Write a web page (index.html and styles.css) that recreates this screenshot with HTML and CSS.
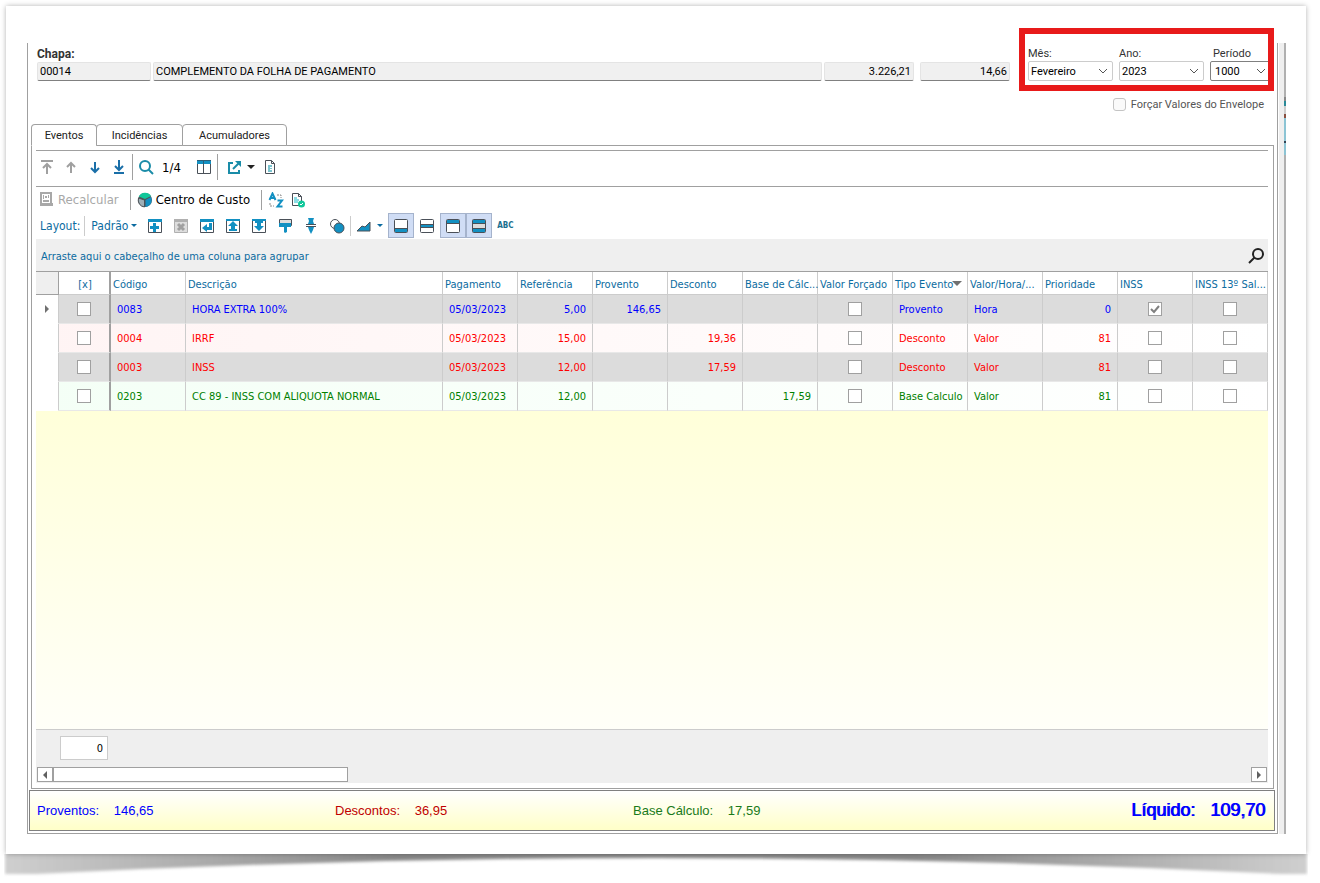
FILE: index.html
```html
<!DOCTYPE html>
<html lang="pt-BR">
<head>
  <meta charset="UTF-8" />
  <meta name="viewport" content="width=device-width, initial-scale=1.0"/>
  <title>Envelope de Pagamento</title>
  <link rel="stylesheet" href="styles.css">
</head>
<body>
  <div class="sheet">
    <div class="window">
      <form class="form">
        <div class="top">
          <div class="chapa">
            <label for="chapa" class="chapa-label">Chapa:</label>
            <div class="fields">
              <input id="chapa" class="field code" value="00014" readonly>
              <input class="field name" value="COMPLEMENTO DA FOLHA DE PAGAMENTO" aria-label="Nome" readonly>
              <input class="field amount" value="3.226,21" aria-label="Valor" readonly>
              <input class="field amount last" value="14,66" aria-label="Base" readonly>
            </div>
          </div>
          <div class="period">
            <div class="pick">
              <label for="mes">Mês:</label>
              <select id="mes"><option>Fevereiro</option></select>
            </div>
            <div class="pick">
              <label for="ano">Ano:</label>
              <select id="ano"><option>2023</option></select>
            </div>
            <div class="pick short">
              <label for="periodo">Período</label>
              <select id="periodo"><option>1000</option></select>
            </div>
          </div>
        </div>
        <label class="force"><input type="checkbox" class="soft-check"> Forçar Valores do Envelope</label>

        <div class="tabs" role="tablist">
          <button type="button" class="tab active" role="tab">Eventos</button>
          <button type="button" class="tab" role="tab">Incidências</button>
          <button type="button" class="tab" role="tab">Acumuladores</button>
        </div>

        <div class="panel">
          <div class="bar nav-bar">
            <button type="button" class="icon gray" aria-label="Primeiro"><svg viewBox="0 0 16 16"><path d="M2 2h12M8 15V5M4 9l4-4 4 4" stroke-width="2"/></svg></button>
            <button type="button" class="icon gray" aria-label="Anterior"><svg viewBox="0 0 16 16"><path d="M8 14V4M4 8l4-4 4 4" stroke-width="2"/></svg></button>
            <button type="button" class="icon blue" aria-label="Próximo"><svg viewBox="0 0 16 16"><path d="M8 3v10M4 9l4 4 4-4" stroke-width="2"/></svg></button>
            <button type="button" class="icon blue" aria-label="Último"><svg viewBox="0 0 16 16"><path d="M8 1v10M4 7l4 4 4-4M3 14h10" stroke-width="2"/></svg></button>
            <span class="sep"></span>
            <button type="button" class="icon teal" aria-label="Buscar"><svg viewBox="0 0 16 16"><circle cx="7" cy="7" r="5" stroke-width="2"/><path d="M10.500 10.500L15 15" stroke-width="2"/></svg></button>
            <span class="count">1/4</span>
            <button type="button" class="icon dark" aria-label="Colunas"><svg viewBox="0 0 16 16"><path d="M1.500 2v12.500h13V2M7.500 3v11"/><path d="M1 1h14v4H1z" fill="#1290c2" stroke="none"/><path d="M7.500 1v4M1 1.500h14" stroke="#2c5f78"/></svg></button>
            <span class="sep"></span>
            <button type="button" class="icon teal export" aria-label="Exportar"><svg viewBox="0 0 16 16"><path d="M7 4H3v10h10v-3" stroke-width="2"/><path d="M7 10l6-6" stroke-width="2"/><path d="M9 2h6v6z" fill="#1a8ca8" stroke="none"/></svg></button>
            <span class="caret black"></span>
            <button type="button" class="icon dark" aria-label="Relatório"><svg viewBox="0 0 16 16"><path d="M3.500 1.500h6l3 3v10h-9zM9.500 1.500v3h3"/><path d="M6 6h4v2H8v1h2v1H8v1h2v2H6z" fill="#7cc4cf" stroke="none"/></svg></button>
          </div>

          <div class="bar action-bar">
            <button type="button" class="text-btn" disabled><svg class="ico" viewBox="0 0 16 16"><path d="M2 1h10v11H2z" fill="#fff" stroke="#a8a8a8" stroke-width="2"/><path d="M4 3h1v4H4zM6 4h2v2H6zM9 3h1v3H9zM4 8h6v2H4z" fill="#a8a8a8"/><path d="M1 11h13v3H1z" fill="#a8a8a8"/></svg>Recalcular</button>
            <span class="sep short"></span>
            <button type="button" class="text-btn"><svg class="ico" viewBox="0 0 16 16"><circle cx="8" cy="8" r="7" fill="#4d5358"/><path d="M8 7L1.800 4.500A7 7 0 0 1 14 4z" fill="#0fc79a"/><path d="M8.500 8L14 5a7 7 0 0 1-5.500 10z" fill="#1290c2"/><path d="M7.500 8v7A7 7 0 0 1 1.500 6z" fill="#9fb0b8" stroke="#4d5358"/></svg>Centro de Custo</button>
            <span class="sep short"></span>
            <button type="button" class="icon" aria-label="Ordenar"><svg viewBox="0 0 16 16"><path d="M1.500 8L4.500 1.500 7.500 8M2.500 6h4M9.500 8.500h4.500l-4.500 6h5" stroke="#1290c2" stroke-width="2"/><path d="M9 3h4v3M2 11v3h4" stroke="#888" stroke-dasharray="2 1"/></svg></button>
            <button type="button" class="icon dark" aria-label="Validar"><svg viewBox="0 0 16 16"><path d="M10 13.500H2.500v-12h6l3 3V9M8.500 1.500v3h3"/><path d="M4 6h3M4 8h5M4 10h4" stroke="#1ab8c8"/><circle cx="11.500" cy="12" r="3.500" fill="#0fc79a" stroke="none"/><path d="M10 12l1 1 2-2" stroke="#fff"/></svg></button>
          </div>

          <div class="bar layout-bar">
            <span class="layout-label">Layout:</span>
            <span class="sep light"></span>
            <button type="button" class="padrao">Padrão <span class="caret"></span></button>
            <button type="button" class="tool" aria-label="Novo layout"><svg viewBox="0 0 16 16"><path d="M1.500 2v12.500h13V2"/><path class="f" d="M1 1h14v3H1z"/><path class="f" d="M6 5h3v3h3v3H9v3H6v-3H3V8h3z"/></svg></button>
            <button type="button" class="tool" aria-label="Excluir layout"><svg viewBox="0 0 16 16"><path d="M1.500 1.500h13v13h-13z" fill="#ddd" stroke="#b0b0b0"/><path d="M1 1h14v3H1z" fill="#b0b0b0" stroke="none"/><path d="M5 6l6 6M11 6l-6 6" stroke="#a0a0a0" stroke-width="3"/></svg></button>
            <button type="button" class="tool" aria-label="Restaurar"><svg viewBox="0 0 16 16"><path d="M1.500 2v12.500h13V2"/><path class="f" d="M1 1h14v3H1z"/><path class="f" d="M10 5h3v7H8v2L3 10l5-4v3h2z"/></svg></button>
            <button type="button" class="tool" aria-label="Exportar layout"><svg viewBox="0 0 16 16"><path d="M1.500 2v12.500h13V2"/><path class="f" d="M1 1h14v2H1z"/><path class="f" d="M8 3l5 5H10v3h2v2H4v-2h2V8H3z"/></svg></button>
            <button type="button" class="tool" aria-label="Importar layout"><svg viewBox="0 0 16 16"><path d="M1.500 2v12.500h13V2"/><path class="f" d="M1 1h14v2H1z"/><path class="f" d="M4 3h8v2h-2v3h3l-5 5-5-5h3V5H4z"/></svg></button>
            <button type="button" class="tool" aria-label="Formatar"><svg viewBox="0 0 16 16"><path d="M2.500 1.500h12v6h-12z" fill="#ddd"/><path class="f" d="M2 5h12v4h-4v5l-2 1-1-1V9H2z"/></svg></button>
            <button type="button" class="tool" aria-label="Ajustar"><svg viewBox="0 0 16 16"><path class="f" d="M5 0h6l-1 3 1 3H5l1-3zM5 9h6l-1 3-2 4-2-4z"/><path d="M3 6.500h10M3 8.500h10"/></svg></button>
            <button type="button" class="tool" aria-label="Condicional"><svg viewBox="0 0 16 16"><circle cx="6" cy="6" r="4.500"/><circle cx="10" cy="10" r="5" fill="#1290c2"/></svg></button>
            <span class="sep light"></span>
            <button type="button" class="tool" aria-label="Gráfico"><svg viewBox="0 0 16 16"><path d="M1 13l5-5 3 1 5-5v9z" fill="#1290c2"/></svg></button>
            <span class="caret"></span>
            <button type="button" class="tool on first" aria-label="Rodapé"><svg viewBox="0 0 16 16"><rect x="1.500" y="1.500" width="13" height="13" rx="1" fill="#fff"/><path class="f" d="M2 11h12v3H2z"/><path d="M2 10.500h12"/></svg></button>
            <button type="button" class="tool" aria-label="Rodapé de grupo"><svg viewBox="0 0 16 16"><rect x="1.500" y="1.500" width="13" height="13" rx="1" fill="#fff"/><path class="f" d="M2 6h12v4H2z"/><path d="M2 6.500h12M2 9.500h12"/></svg></button>
            <button type="button" class="tool on" aria-label="Cabeçalho"><svg viewBox="0 0 16 16"><rect x="1.500" y="1.500" width="13" height="13" rx="1" fill="#fff"/><path class="f" d="M2 2h12v3H2z"/><path d="M2 5.500h12"/></svg></button>
            <button type="button" class="tool on" aria-label="Linhas"><svg viewBox="0 0 16 16"><rect x="1.500" y="1.500" width="13" height="13" rx="1" fill="#ddd"/><path class="f" d="M2 2h12v3H2zM2 11h12v3H2z"/><path d="M2 5.500h12M2 10.500h12"/></svg></button>
            <button type="button" class="tool abc">ABC</button>
          </div>

          <div class="group-bar">
            <span>Arraste aqui o cabeçalho de uma coluna para agrupar</span>
            <button type="button" class="icon find" aria-label="Localizar"><svg viewBox="0 0 16 16"><circle cx="10" cy="6" r="5" stroke-width="2"/><path d="M6.500 9.500L1 15" stroke-width="2"/></svg></button>
          </div>

          <div class="grid">
            <table>
              <colgroup>
                <col class="c-mark"><col class="c-check"><col class="c-std"><col>
                <col class="c-std"><col class="c-std"><col class="c-std"><col class="c-std"><col class="c-std"><col class="c-std">
                <col class="c-std"><col class="c-std"><col class="c-std"><col class="c-std"><col class="c-std">
              </colgroup>
              <thead>
                <tr>
                  <th class="corner"></th>
                  <th class="sel">[x]</th>
                  <th>Código</th>
                  <th>Descrição</th>
                  <th>Pagamento</th>
                  <th>Referência</th>
                  <th>Provento</th>
                  <th>Desconto</th>
                  <th>Base de Cálc...</th>
                  <th>Valor Forçado</th>
                  <th class="sorted">Tipo Evento</th>
                  <th>Valor/Hora/...</th>
                  <th>Prioridade</th>
                  <th>INSS</th>
                  <th>INSS 13º Sal...</th>
                </tr>
              </thead>
              <tbody>
                <tr class="shade blue-row">
                  <td class="mark"><span class="pointer"></span></td>
                  <td class="sel"><input type="checkbox" aria-label="Selecionar 0083"></td>
                  <td>0083</td><td>HORA EXTRA 100%</td><td>05/03/2023</td>
                  <td class="num">5,00</td><td class="num">146,65</td><td class="num"></td><td class="num"></td>
                  <td class="mid"><input type="checkbox" aria-label="Valor Forçado"></td>
                  <td>Provento</td><td>Hora</td><td class="num">0</td>
                  <td class="mid"><input type="checkbox" aria-label="INSS" checked></td>
                  <td class="mid"><input type="checkbox" aria-label="INSS 13º"></td>
                </tr>
                <tr class="pink red-row">
                  <td class="mark"></td>
                  <td class="sel"><input type="checkbox" aria-label="Selecionar 0004"></td>
                  <td>0004</td><td>IRRF</td><td>05/03/2023</td>
                  <td class="num">15,00</td><td class="num"></td><td class="num">19,36</td><td class="num"></td>
                  <td class="mid"><input type="checkbox" aria-label="Valor Forçado"></td>
                  <td>Desconto</td><td>Valor</td><td class="num">81</td>
                  <td class="mid"><input type="checkbox" aria-label="INSS"></td>
                  <td class="mid"><input type="checkbox" aria-label="INSS 13º"></td>
                </tr>
                <tr class="shade red-row">
                  <td class="mark"></td>
                  <td class="sel"><input type="checkbox" aria-label="Selecionar 0003"></td>
                  <td>0003</td><td>INSS</td><td>05/03/2023</td>
                  <td class="num">12,00</td><td class="num"></td><td class="num">17,59</td><td class="num"></td>
                  <td class="mid"><input type="checkbox" aria-label="Valor Forçado"></td>
                  <td>Desconto</td><td>Valor</td><td class="num">81</td>
                  <td class="mid"><input type="checkbox" aria-label="INSS"></td>
                  <td class="mid"><input type="checkbox" aria-label="INSS 13º"></td>
                </tr>
                <tr class="mint green-row">
                  <td class="mark"></td>
                  <td class="sel"><input type="checkbox" aria-label="Selecionar 0203"></td>
                  <td>0203</td><td>CC 89 - INSS COM ALIQUOTA NORMAL</td><td>05/03/2023</td>
                  <td class="num">12,00</td><td class="num"></td><td class="num"></td><td class="num">17,59</td>
                  <td class="mid"><input type="checkbox" aria-label="Valor Forçado"></td>
                  <td>Base Calculo</td><td>Valor</td><td class="num">81</td>
                  <td class="mid"><input type="checkbox" aria-label="INSS"></td>
                  <td class="mid"><input type="checkbox" aria-label="INSS 13º"></td>
                </tr>
              </tbody>
            </table>
          </div>

          <div class="grid-footer">
            <input class="sum" value="0" aria-label="Selecionados" readonly>
            <div class="scroll">
              <button type="button" class="arrow left" aria-label="Rolar para a esquerda"></button>
              <div class="thumb"></div>
              <button type="button" class="arrow right" aria-label="Rolar para a direita"></button>
            </div>
          </div>
        </div>

        <div class="totals">
          <div class="total blue-total">Proventos: <span>146,65</span></div>
          <div class="total red-total">Descontos: <span>36,95</span></div>
          <div class="total green-total">Base Cálculo: <span>17,59</span></div>
          <div class="net">Líquido: <span>109,70</span></div>
        </div>
      </form>
      <div class="edge"></div>
    </div>
  </div>
  <svg class="shadow" viewBox="0 0 1304 29" preserveAspectRatio="none" aria-hidden="true">
    <defs>
      <linearGradient id="fade">
        <stop offset="0" stop-color="#cfcfcf"/>
        <stop offset="0.300" stop-color="#888"/>
        <stop offset="0.700" stop-color="#888"/>
        <stop offset="1" stop-color="#cfcfcf"/>
      </linearGradient>
      <filter id="soft"><feGaussianBlur stdDeviation="1.500"/></filter>
    </defs>
    <path d="M1 -6H1303V20H1278Q960 4 652 4T32 20H1z" fill="url(#fade)" filter="url(#soft)"/>
  </svg>
</body>
</html>
```

FILE: styles.css
```css
* {
  box-sizing: border-box;
}

body {
  margin: 0;
  padding: 6px 14px 0 6px;
  min-height: 100vh;
  display: flex;
  flex-direction: column;
  background: #fff;
  color: #000;
  font-family: "DejaVu Sans Condensed", "DejaVu Sans", sans-serif;
  font-size: 11px;
}

button, input, select {
  font: inherit;
  color: inherit;
  margin: 0;
}

button {
  background: none;
  border: none;
  padding: 0;
}

svg {
  display: block;
  fill: none;
  stroke: currentColor;
}

.sheet {
  flex: 1;
  display: flex;
  padding: 37px 20px 20px 21px;
  background: #fff;
  box-shadow: 0 0 5px rgba(0, 0, 0, 0.3);
  position: relative;
  z-index: 1;
}

.shadow {
  width: calc(100% + 4px);
  height: 29px;
  margin-left: -2px;
  stroke: none;
}

.window {
  flex: 1;
  display: flex;
  min-width: 0;
}

.form {
  flex: 1;
  min-width: 0;
  display: flex;
  flex-direction: column;
  padding: 0 2px 2px 1px;
  border: 1px solid #a0a0a0;
  border-top: none;
}

/* strip of the window behind */
.edge {
  width: 7px;
  margin-left: 1px;
  padding-top: 40px;
  background: #efefef;
  border-right: 2px solid #b0b0b0;
  position: relative;
}

.edge::after {
  content: "";
  position: absolute;
  top: 54px;
  right: -2px;
  width: 2px;
  height: 58px;
  background: linear-gradient(#888 0 4px, #2a8a98 4px 9px, #ccc 9px 17px, #8a5040 17px 21px, #8cc4d4 21px 44px, #345 44px 46px, #8cc4d4 46px);
}

/* header */
.top {
  display: flex;
  padding: 3px 5px 0 8px;
  font-family: Roboto, sans-serif;
}

.chapa {
  flex: 1;
  min-width: 0;
}

.chapa-label {
  display: block;
  height: 16px;
  line-height: 16px;
  font-size: 12px;
  font-weight: bold;
  color: #333;
}

.fields {
  display: flex;
  gap: 2px;
}

.field {
  height: 19px;
  padding: 0 2px;
  min-width: 0;
  background: #f0f0f0;
  border: 1px solid #e4e4e4;
  border-bottom-color: #808080;
  border-radius: 2px;
}

.code { width: 114px; }
.name { flex: 1; }
.amount { width: 90px; text-align: right; }
.last { margin-left: 4px; }

.period {
  display: flex;
  gap: 6px;
  margin-left: 18px;
  position: relative;
}

/* red frame over the period pickers */
.period::after {
  content: "";
  position: absolute;
  inset: -18px -4px -10px -9px;
  border: 6px solid #e81a1a;
  pointer-events: none;
}

.pick {
  width: 85px;
}

.pick.short {
  width: 60px;
}

.pick label {
  display: block;
  height: 15px;
  line-height: 15px;
  color: #333;
}

.short label {
  padding-left: 3px;
}

.pick select {
  display: block;
  width: 100%;
  height: 20px;
  padding: 0 2px;
  appearance: none;
  border: 1px solid #ccc;
  border-radius: 2px;
  background: #fff url("data:image/svg+xml,%3Csvg xmlns='http://www.w3.org/2000/svg' width='10' height='6'%3E%3Cpath d='M1 1l4 4 4-4' fill='none' stroke='%23555'/%3E%3C/svg%3E") no-repeat right 4px center;
}

.pick.short select {
  padding-left: 4px;
  border-color: #808080;
  background-position: right 3px center;
}

.force {
  display: flex;
  align-items: center;
  align-self: flex-end;
  gap: 5px;
  height: 18px;
  margin: 14px 11px 0 0;
  color: #555;
  font-family: Roboto, sans-serif;
}

input[type="checkbox"] {
  appearance: none;
  display: block;
  width: 14px;
  height: 14px;
  margin: 0 auto;
  background: #fff;
  border: 1px solid #a0a0a0;
}

input[type="checkbox"]:checked {
  background: #fff url("data:image/svg+xml,%3Csvg xmlns='http://www.w3.org/2000/svg' width='10' height='10'%3E%3Cpath d='M1 5l3 3 5-6' fill='none' stroke='%23808080' stroke-width='2'/%3E%3C/svg%3E") no-repeat center;
}

.force .soft-check {
  width: 13px;
  height: 13px;
  border-color: #c4c4c4;
  border-radius: 3px;
  background: #fafafa;
}

/* tabs */
.tabs {
  display: flex;
  height: 22px;
  margin: 11px 0 0 2px;
  position: relative;
  z-index: 1;
  font-family: Roboto, sans-serif;
}

.tab {
  height: 22px;
  width: 87px;
  margin-left: -1px;
  border: 1px solid #a0a0a0;
  border-radius: 4px 4px 0 0;
  background: #fff;
  color: #222;
}

.tab.active {
  width: 66px;
  margin-left: 0;
  border-bottom-color: #fff;
}

.tab:last-child {
  width: 105px;
}

.panel {
  flex: 1;
  display: flex;
  flex-direction: column;
  margin: -1px 1px 1px 2px;
  padding: 4px 5px 5px 4px;
  border: 1px solid #a0a0a0;
}

/* toolbars */
.bar {
  display: flex;
  align-items: center;
}

.nav-bar {
  height: 36px;
  gap: 8px;
  padding: 0 3px 3px;
  border-top: 1px solid #a0a0a0;
}

.icon {
  width: 16px;
  height: 16px;
}

.icon svg, .tool svg, .ico {
  width: 16px;
  height: 16px;
}

.gray { color: #a0a0a0; }
.blue { color: #1a6fa8; }
.teal { color: #1a8ca8; }
.dark { color: #4a5058; }

.sep {
  width: 1px;
  height: 26px;
  background: #a0a0a0;
  margin: 0 -3px;
}

.sep.short {
  height: 20px;
  margin: 0;
}

.sep.light {
  background: #ccc;
  margin: 0;
}

.count {
  font-size: 13px;
  margin-right: 7px;
}

.export {
  margin-left: 3px;
}

.caret {
  display: inline-block;
  border: 3px solid transparent;
  border-top-color: #0b6ba0;
  border-bottom: none;
}

.caret.black {
  border-width: 4px;
  border-bottom: none;
  border-top-color: #222;
  margin: 0 -1px 0 -3px;
}

.action-bar {
  height: 26px;
  gap: 6px;
  padding-left: 3px;
  border-top: 1px solid #a0a0a0;
}

.text-btn {
  display: flex;
  align-items: center;
  gap: 3px;
  padding-right: 5px;
  font-size: 13px;
}

.text-btn:disabled {
  color: #a8a8a8;
}

.ico {
  stroke: none;
}

.layout-bar {
  height: 27px;
  color: #0b6ba0;
  font-size: 12px;
}

.layout-label {
  padding: 0 4px;
}

.layout-bar .sep {
  height: 20px;
}

.padrao {
  display: flex;
  align-items: center;
  gap: 3px;
  padding: 0 5px 0 6px;
}

.tool {
  width: 26px;
  height: 25px;
  display: flex;
  align-items: center;
  justify-content: center;
  color: #4a5058;
}

.tool .f {
  fill: #1290c2;
  stroke: none;
}

.tool.on {
  background: #d0ddf5;
  border: 1px solid #a5b3cc;
}

.tool.first {
  margin-left: 5px;
}

.tool.abc {
  color: #1a6f8f;
  font-size: 8px;
  font-weight: bold;
}

/* grid */
.group-bar {
  display: flex;
  align-items: center;
  justify-content: space-between;
  height: 33px;
  padding: 2px 4px 0 5px;
  background: #efefef;
  border-bottom: 1px solid #a0a0a0;
  color: #0b6ba0;
}

.find {
  color: #222;
}

.grid {
  flex: 1;
  background: linear-gradient(#ffffcc, #fffff8);
}

table {
  width: 100%;
  table-layout: fixed;
  border-collapse: separate;
  border-spacing: 0;
}

.c-mark { width: 23px; }
.c-check { width: 52px; }
.c-std { width: 75px; }

th {
  height: 23px;
  padding: 2px 0 0 2px;
  background: #fff;
  border-right: 1px solid #ccc;
  border-bottom: 1px solid #ccc;
  color: #0b6ba0;
  font-weight: normal;
  text-align: left;
  white-space: nowrap;
}

th.corner {
  background: #efefef;
  border-color: #a0a0a0;
}

th.sel {
  text-align: center;
}

th.sorted {
  position: relative;
}

.sorted::after {
  content: "";
  position: absolute;
  right: 5px;
  top: 9px;
  border: 5px solid transparent;
  border-top-color: #707070;
  border-bottom: none;
}

td {
  height: 29px;
  padding: 0 6px;
  border-right: 1px solid #ccc;
  border-bottom: 1px solid #e8e8e8;
  white-space: nowrap;
}

td.mark {
  padding: 0;
  background: #fff;
  border-bottom-color: #fff;
}

.pointer {
  display: block;
  width: 0;
  margin-left: 9px;
  border: 4px solid transparent;
  border-left-color: #707070;
  border-right: none;
}

.sel {
  border-right: 2px solid #a0a0a0;
}

td.sel, td.mid {
  padding: 0;
}

.num { text-align: right; }

.shade { background: #dcdcdc; }
.pink { background: linear-gradient(to right, #fff4f4, #fff); }
.mint { background: linear-gradient(to right, #f4fff6, #fff); }

.blue-row { color: #0000ff; }
.red-row { color: #ff0000; }
.green-row { color: #008000; }

.grid-footer {
  height: 54px;
  padding: 6px 1px 0;
  background: #efefef;
  border-top: 1px solid #ccc;
}

.sum {
  display: block;
  width: 48px;
  height: 24px;
  margin: 0 0 7px 23px;
  padding: 0 4px;
  border: 1px solid #ccc;
  background: #fff;
  text-align: right;
}

.scroll {
  display: flex;
  height: 15px;
}

.arrow {
  width: 16px;
  border: 1px solid #a0a0a0;
  background: #fff;
  display: flex;
  align-items: center;
  justify-content: center;
}

.arrow::before {
  content: "";
  border: 4px solid transparent;
}

.arrow.left::before {
  border-right-color: #606060;
  border-left: none;
}

.arrow.right::before {
  border-left-color: #606060;
  border-right: none;
}

.arrow.right {
  margin-left: auto;
}

.thumb {
  width: 24%;
  border: 1px solid #a0a0a0;
  background: #fff;
}

/* totals */
.totals {
  display: flex;
  align-items: center;
  height: 41px;
  padding: 0 9px 0 7px;
  border: 1px solid #808080;
  background: linear-gradient(#fff, #ffffc8);
  font-family: "Liberation Sans", Arial, sans-serif;
  font-size: 13px;
}

.total {
  width: 298px;
}

.total span {
  margin-left: 11px;
}

.blue-total, .net { color: #0000ff; }
.red-total { color: #c00000; }
.green-total { color: #1a7a1a; }

.net {
  margin-left: auto;
  font-size: 18px;
  text-shadow: 1px 0 #0000ff;
}

.net span {
  margin-left: 10px;
}
```
